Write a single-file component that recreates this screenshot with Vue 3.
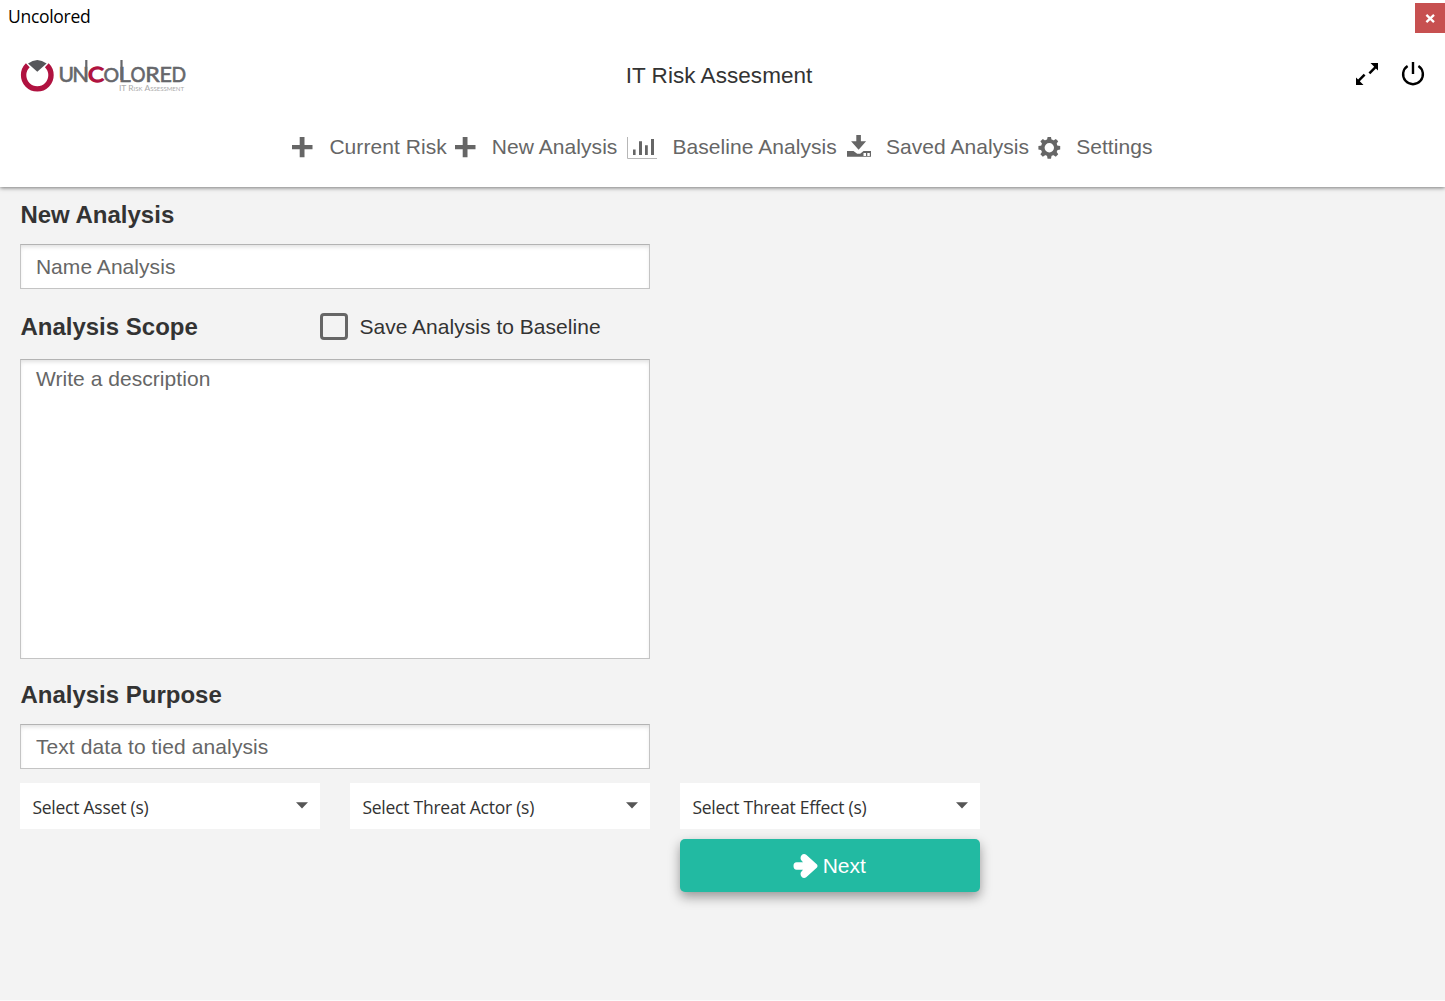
<script setup>
const navItems = [
  { label: 'Current Risk', icon: 'plus', slot: 45 },
  { label: 'New Analysis', icon: 'plus', slot: 45 },
  { label: 'Baseline Analysis', icon: 'chart', slot: 55 },
  { label: 'Saved Analysis', icon: 'download', slot: 49 },
  { label: 'Settings', icon: 'gear', slot: 47 }
]
const selects = ['Select Asset (s)', 'Select Threat Actor (s)', 'Select Threat Effect (s)']
const wordmark = [
  { c: 'U', x: 58.5, w: 15.5 },
  { c: 'N', x: 72.3, w: 16.5 },
  { c: 'C', x: 88, w: 16, accent: true },
  { c: 'O', x: 103.6, w: 15.6, size: 19 },
  { c: 'L', x: 118.8, w: 12, size: 21 },
  { c: 'O', x: 130.4, w: 15, size: 21 },
  { c: 'R', x: 145.2, w: 14.5, size: 21 },
  { c: 'E', x: 159.4, w: 12.4, size: 21 },
  { c: 'D', x: 171.4, w: 14.6, size: 21 }
]
const teeth = [0, 45, 90, 135, 180, 225, 270, 315]
</script>

<template>
  <div class="window">
    <header class="top">
      <div class="titlebar">
        <span class="app-name">Uncolored</span>
        <button class="close" aria-label="Close">
          <svg width="30" height="30" viewBox="0 0 30 30"><path d="M11.4 11.9l7.6 7.2M19 11.9l-7.6 7.2" stroke="#fff" stroke-width="2.3" /></svg>
        </button>
      </div>
      <div class="brandbar">
        <svg class="logo" width="190" height="44" viewBox="0 54 190 44">
          <path d="M27.8 65.3A13.7 13.7 0 1 0 46.8 65.3" fill="none" stroke="#b01240" stroke-width="5.4" />
          <path d="M28 63.6Q37.3 56.4 46.6 63.6L37.3 71.8Z" fill="#55565a" />
          <text
            v-for="(l, i) in wordmark" :key="i" :x="l.x" y="82.3" :textLength="l.w"
            lengthAdjust="spacingAndGlyphs" :font-size="l.size || 21.5"
            :class="['mark', { accent: l.accent }]"
          >{{ l.c }}</text>
          <path d="M86.3 60V82M121.5 60V80" stroke="#66676b" stroke-width="2.2" />
          <text class="tagline" x="119" y="91.2" textLength="65" lengthAdjust="spacingAndGlyphs">IT Risk Assessment</text>
        </svg>
        <h1>IT Risk Assesment</h1>
        <div class="tools">
          <svg width="24" height="24" viewBox="0 0 24 24">
            <path d="M15.5 1H23v7.5L20.9 6.4l-5.6 5.8-1.8-1.8 5.7-5.7zM8.5 23H1v-7.5l2.1 2.1 5.6-5.8 1.8 1.8-5.7 5.7z" fill="#000" />
          </svg>
          <svg width="24" height="26" viewBox="0 0 24 26">
            <path d="M6.6 5A9.9 9.9 0 1 0 17.4 5M12 1v12" fill="none" stroke="#000" stroke-width="2.4" />
          </svg>
        </div>
      </div>
      <nav>
        <a v-for="(n, i) in navItems" :key="i">
          <svg :width="n.slot" height="32" :viewBox="`0 0 ${n.slot} 32`">
            <path v-if="n.icon === 'plus'" d="M8 14h7.7V6h4.8v8h8v4.3h-8v8h-4.8v-8H8z" />
            <g v-else-if="n.icon === 'chart'">
              <path d="M10.5 6v21.5H40" fill="none" stroke="#b7b7b7" stroke-width="1" />
              <path d="M16 18.5h2.6V24H16zM22 10.2h3V24h-3zM28 14.3h2.8V24H28zM34 8h3v16h-3z" />
            </g>
            <g v-else-if="n.icon === 'download'">
              <path d="M19.3 4h4.6v6.3h5.2l-7.5 8.5-7.5-8.5h5.2z" />
              <path d="M10 20h6.5l3.7 2.7h3l3.3-2.7H34v5.7H10z" />
              <path d="M26.5 22h2.5v3h-2.5zM30.3 22h2.5v3h-2.5z" fill="#fff" />
            </g>
            <g v-else>
              <circle cx="20.3" cy="16.8" r="6.6" fill="none" stroke="#666" stroke-width="3.8" />
              <path v-for="t in teeth" :key="t" d="M17.9 9.5L18.6 5.9H22L22.7 9.5Z" :transform="`rotate(${t} 20.3 16.8)`" />
            </g>
          </svg>
          <span>{{ n.label }}</span>
        </a>
      </nav>
    </header>

    <main>
      <h2>New Analysis</h2>
      <input class="field" placeholder="Name Analysis" />
      <div class="scope">
        <h2>Analysis Scope</h2>
        <label><span class="box"></span>Save Analysis to Baseline</label>
      </div>
      <textarea class="field area" placeholder="Write a description"></textarea>
      <h2 class="purpose">Analysis Purpose</h2>
      <input class="field last" placeholder="Text data to tied analysis" />
      <div class="selects">
        <div v-for="s in selects" :key="s" class="select">
          <span>{{ s }}</span>
          <svg width="12" height="7" viewBox="0 0 12 7"><path d="M0 .3h12L6 6.5z" fill="#555" /></svg>
        </div>
      </div>
      <button class="next">
        <svg width="25" height="26" viewBox="0 0 25 26">
          <path d="M3.6 9.3H10L8.3 7.2C5.9 4.2 9.6-1 13.2 1.7L24 11.6Q25 13 24 14.4L13.2 24.3C9.6 27 5.9 21.8 8.3 18.8L10 16.7H3.6Q.5 16.7 .5 13T3.6 9.3Z" fill="#fff" />
        </svg>
        <span>Next</span>
      </button>
    </main>
  </div>
</template>

<style>
body { margin: 0; background: #fbfbfb; }
</style>

<style scoped>
* { box-sizing: border-box; }
.window {
  height: 1000px; background: #f3f3f3; color: #333; overflow: hidden;
  font-family: "Liberation Sans", Arial, sans-serif; font-size: 21px;
}
.top { position: relative; height: 187px; background: #fff; box-shadow: 0 1px 4px rgba(0, 0, 0, .5); }
.titlebar { display: flex; justify-content: space-between; height: 36px; padding-top: 3px; }
.app-name { padding-left: 8px; font: 17.5px/26px "Open Sans", sans-serif; letter-spacing: -.3px; color: #000; }
.close { width: 30px; height: 30px; padding: 0; border: 0; background: #c75050; }
.close svg { display: block; }
.brandbar { display: grid; grid-template-columns: 1fr auto 1fr; align-items: center; height: 80px; padding-right: 7px; }
h1 { margin: 0; font-size: 22.5px; font-weight: 400; line-height: 26px; letter-spacing: .05px; }
.mark { font-family: Lato, sans-serif; fill: #66676b; stroke: #66676b; stroke-width: .6px; }
.mark.accent { fill: #b01240; stroke: #b01240; stroke-width: 1.3px; }
.tagline { font-family: Lato, sans-serif; font-size: 7px; font-variant: small-caps; fill: #aaa; }
.tools { display: flex; justify-content: flex-end; align-items: center; gap: 22px; padding: 0 13px 4px 0; }
nav { display: flex; padding: 15px 0 0 284.4px; color: #666; letter-spacing: .06px; }
nav a { display: flex; align-items: center; height: 32px; white-space: nowrap; }
nav svg { flex: none; fill: #666; }
main { padding: 14px 20px 0 20.4px; }
h2 { margin: 0; font-size: 24px; line-height: 28px; font-weight: 700; }
.field {
  display: block; width: 630px; height: 45px; margin: 15px 0 0; padding: 0 14px 0 14.5px;
  border: 1px solid #c4c4c4; border-top-color: #b3b3b3; border-radius: 0; outline: 0;
  background: #fff; box-shadow: inset 0 3px 4px -1px rgba(0, 0, 0, .12);
  font: 21px/24px "Liberation Sans", Arial, sans-serif; letter-spacing: .05px; resize: none;
}
.field::placeholder { color: #666; opacity: 1; }
.scope { display: flex; align-items: center; height: 28px; margin-top: 24px; }
.scope h2 { width: 299.5px; }
.scope label { display: flex; align-items: center; gap: 11.5px; letter-spacing: .03px; }
.box { width: 28px; height: 27px; margin-bottom: 2px; border: 3px solid #666; border-radius: 4px; }
.area { height: 300px; margin-top: 18px; padding-top: 7px; }
.purpose { margin-top: 22px; }
.last { margin-top: 15px; letter-spacing: .1px; }
.selects { display: flex; gap: 30px; margin-top: 14px; }
.select {
  display: flex; justify-content: space-between; align-items: center; width: 300px; height: 46px;
  padding: 2px 12px 0; background: #fff; font: 17.5px/24px "Open Sans", sans-serif; letter-spacing: -.24px;
}
.select svg { margin-bottom: 3px; }
.next {
  display: flex; align-items: center; justify-content: center; gap: 4.5px; width: 300px; height: 53px;
  margin: 10px 0 0 659.6px; padding: 0 1px 0 0; border: 0; border-radius: 5px; background: #22baa2; color: #fff;
  font: 21px/24px "Liberation Sans", Arial, sans-serif; box-shadow: 0 5px 12px rgba(0, 0, 0, .38);
}
</style>
